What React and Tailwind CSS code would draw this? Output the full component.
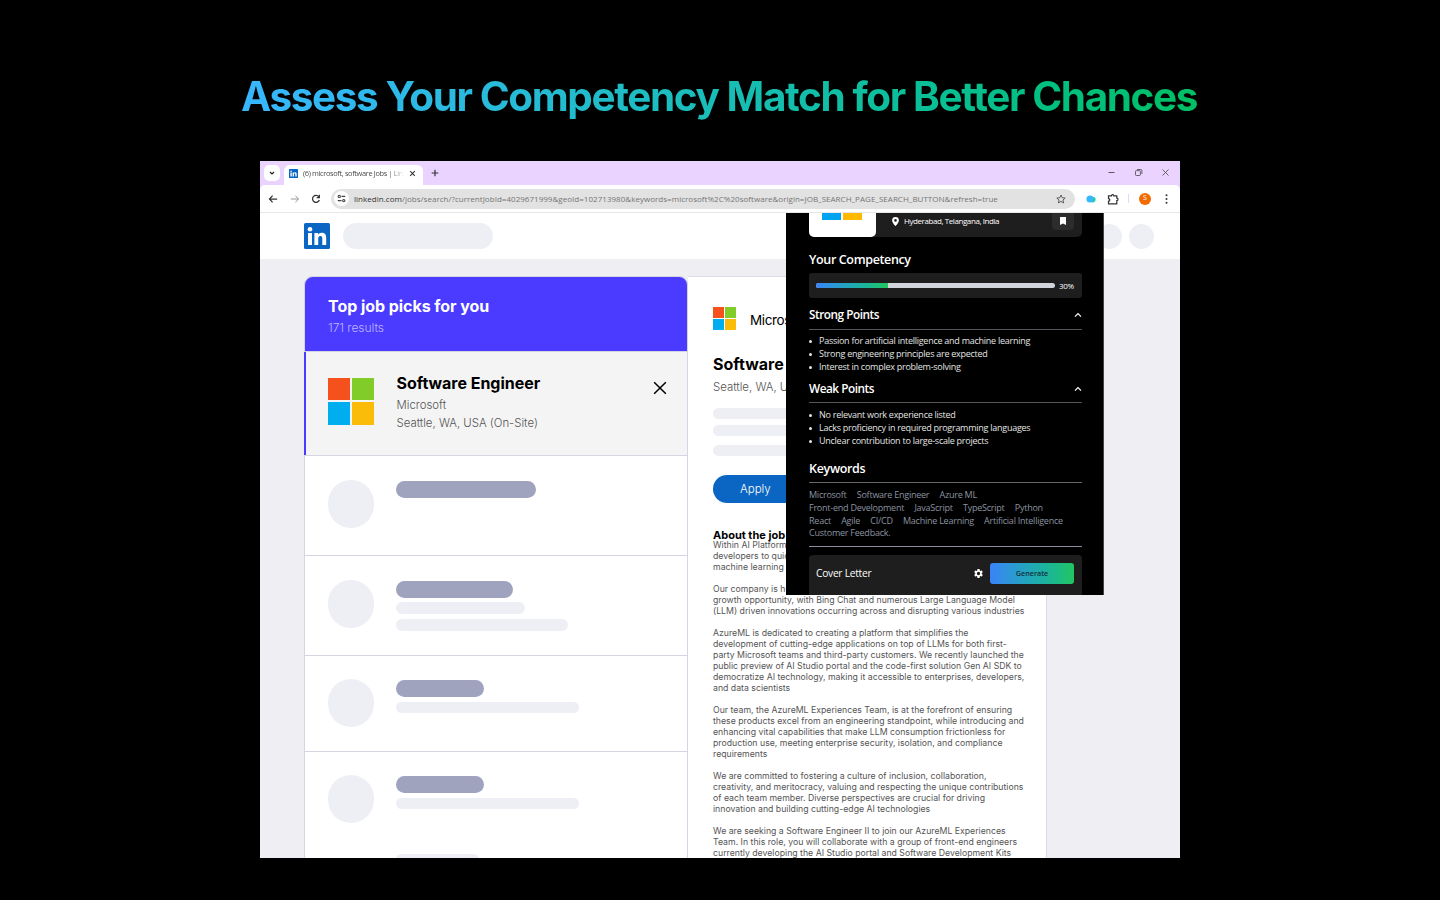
import React from "react";

const jobs = [
  { h: "h-[100px]", avatar: "mt-[24px]", bars: ["mt-[25px] h-[17px] w-[140px] bg-[#a0a3bd]"] },
  { h: "h-[100px]", avatar: "mt-[24px]", bars: ["mt-[25px] h-[17px] w-[116.5px] bg-[#a0a3bd]", "mt-[4.5px] h-[11.5px] w-[128.5px] bg-[#eeeff5]", "mt-[5.5px] h-[11.5px] w-[172px] bg-[#eeeff5]"] },
  { h: "h-[96px]", avatar: "mt-[23px]", bars: ["mt-[24px] h-[17px] w-[88px] bg-[#a0a3bd]", "mt-[5px] h-[11px] w-[182.5px] bg-[#eeeff5]"] },
  { h: "h-[107px]", avatar: "mt-[23px]", bars: ["mt-[24.5px] h-[17px] w-[88px] bg-[#a0a3bd]", "mt-[4.5px] h-[11px] w-[182.5px] bg-[#eeeff5]", "mt-[45px] h-[11px] w-[83px] bg-[#eeeff5]"] },
];

const about = [
  ["Within AI Platform, our team empowers", "developers to quickly build, train and deploy", "machine learning models"],
  ["Our company is heavily investing in this space as a", "growth opportunity, with Bing Chat and numerous Large Language Model", "(LLM) driven innovations occurring across and disrupting various industries"],
  ["AzureML is dedicated to creating a platform that simplifies the", "development of cutting-edge applications on top of LLMs for both first-", "party Microsoft teams and third-party customers. We recently launched the", "public preview of AI Studio portal and the code-first solution Gen AI SDK to", "democratize AI technology, making it accessible to enterprises, developers,", "and data scientists"],
  ["Our team, the AzureML Experiences Team, is at the forefront of ensuring", "these products excel from an engineering standpoint, while introducing and", "enhancing vital capabilities that make LLM consumption frictionless for", "production use, meeting enterprise security, isolation, and compliance", "requirements"],
  ["We are committed to fostering a culture of inclusion, collaboration,", "creativity, and meritocracy, valuing and respecting the unique contributions", "of each team member. Diverse perspectives are crucial for driving", "innovation and building cutting-edge AI technologies"],
  ["We are seeking a Software Engineer II to join our AzureML Experiences", "Team. In this role, you will collaborate with a group of front-end engineers", "currently developing the AI Studio portal and Software Development Kits"],
];

const keywords = [
  ["Microsoft", "Software Engineer", "Azure ML"],
  ["Front-end Development", "JavaScript", "TypeScript", "Python"],
  ["React", "Agile", "CI/CD", "Machine Learning", "Artificial Intelligence"],
  ["Customer Feedback."],
];

function LinkedIn({ className }) {
  return (
    <svg className={className} viewBox="0 0 26 26">
      <rect width="26" height="26" rx="1.5" fill="#0a66c2" />
      <circle cx="6" cy="6.3" r="2.3" fill="#fff" />
      <path d="M4 10h4v12H4zM10.4 10h3.700v1.600c.6-1.1 1.900-1.900 3.700-1.900 3.700 0 4.400 2.400 4.400 5.700V22h-3.900v-5.800c0-1.500-.1-3.100-1.900-3.100s-2.200 1.500-2.200 3.100V22h-3.800z" fill="#fff" />
    </svg>
  );
}

function Microsoft({ className }) {
  return (
    <div className={`grid shrink-0 grid-cols-2 ${className}`}>
      <div className="bg-[#f4511c]" />
      <div className="bg-[#81cc28]" />
      <div className="bg-[#00adef]" />
      <div className="bg-[#fbbc09]" />
    </div>
  );
}

function Stroke({ className, d, w = 1.3, box = "0 0 12 12" }) {
  return (
    <svg className={`shrink-0 ${className}`} viewBox={box} fill="none" stroke="currentColor" strokeWidth={w}>
      <path d={d} />
    </svg>
  );
}

function Browser() {
  return (
    <div className="shrink-0 bg-[#ead4ff] font-['Open_Sans','Noto_Sans',sans-serif]">
      <div className="flex h-[24px] items-start">
        <div className="ml-[4px] mt-[4px] flex h-[16px] w-[16px] items-center justify-center rounded-[5px] bg-white text-[#222]">
          <Stroke className="size-[8px]" w={1.8} d="M3 4.5 6 7.5 9 4.5" />
        </div>
        <div className="ml-[4px] mt-[4px] flex h-[20px] w-[139px] items-center rounded-t-[6px] bg-white pb-[4px] pl-[5px] text-[#333]">
          <LinkedIn className="size-[9px] shrink-0" />
          <div className="ml-[5px] w-[101px] shrink-0 overflow-hidden whitespace-nowrap bg-gradient-to-r from-[#444] from-85% to-[#ffffff] bg-clip-text text-[7.4px] leading-[12px] tracking-[-0.35px] text-transparent">(6) microsoft, software Jobs | Lin</div>
          <Stroke className="ml-[5px] size-[7px]" w={1.8} d="M2 2 10 10M10 2 2 10" />
        </div>
        <Stroke className="ml-[8px] mt-[8px] size-[8px] text-[#333]" w={1.8} d="M6 1V11M1 6H11" />
        <div className="ml-auto mr-[10px] mt-[7px] flex items-center gap-[18px] text-[#555]">
          <Stroke className="size-[9px]" w={1.3} d="M2 6H10" />
          <Stroke className="size-[9px]" w={1.2} d="M2 4.5a1 1 0 0 1 1-1H7.5a1 1 0 0 1 1 1V9a1 1 0 0 1-1 1H3a1 1 0 0 1-1-1ZM4 2H9A1.5 1.5 0 0 1 10.5 3.5V8" />
          <Stroke className="size-[9px]" w={1.2} d="M2 2 10 10M10 2 2 10" />
        </div>
      </div>
      <div className="flex h-[28px] items-center rounded-t-[5px] border-b border-[#e8e6ea] bg-white text-[#333]">
        <Stroke className="ml-[8px] size-[10px]" w={1.5} d="M11 6H2M5.5 2 1.8 6 5.5 10" />
        <Stroke className="ml-[12px] size-[10px] text-[#999]" w={1.2} d="M1 6H10M6.5 2 10.2 6 6.5 10" />
        <Stroke className="ml-[11px] size-[10px]" w={1.5} d="M10 7.2A4.2 4.2 0 1 1 9.3 3.2M10 1V4.2H6.8" />
        <div className="ml-[10px] flex h-[20px] w-[744px] items-center rounded-full bg-[#e2e2e2]">
          <div className="ml-[3px] flex size-[15px] items-center justify-center rounded-full bg-white">
            <svg className="size-[9px]" viewBox="0 0 12 12" fill="none" stroke="#444" strokeWidth="1.5">
              <path d="M6 3.2H11M1 8.8H6" />
              <circle cx="3" cy="3.2" r="1.5" />
              <circle cx="9" cy="8.8" r="1.5" />
            </svg>
          </div>
          <div className="ml-[5px] whitespace-nowrap text-[8px] tracking-[0.030px] text-[#757575]">
            <span className="text-[#333]">linkedin.com</span>/jobs/search/?currentJobId=4029671999&amp;geoId=102713980&amp;keywords=microsoft%2C%20software&amp;origin=JOB_SEARCH_PAGE_SEARCH_BUTTON&amp;refresh=true
          </div>
          <svg className="ml-auto mr-[9px] size-[10px]" viewBox="0 0 24 24" fill="none" stroke="#444" strokeWidth="2">
            <path d="M12 2.5 15 9l7 .7-5.300 4.700 1.600 7L12 17.700 5.700 21.400l1.600-7L2 9.700 9 9Z" />
          </svg>
        </div>
        <svg className="ml-[11px] h-[8px] w-[10px]" viewBox="0 0 10 8">
          <circle cx="6.800" cy="4.600" r="2.800" fill="#17d69a" />
          <circle cx="4" cy="4" r="3.600" fill="#38b6ff" />
        </svg>
        <Stroke className="ml-[11px] size-[12px]" w={1.200} d="M1.500 2.800H4.500C4.500 1.200 6.800 1.200 6.800 2.800H9.800V5.200C11.400 5.200 11.400 7.600 9.800 7.600V10.800H1.500V8.200C3.200 8.200 3.200 5.600 1.500 5.600Z" />
        <div className="ml-[9px] h-[9px] w-[1px] bg-[#ead4ff]" />
        <div className="ml-[10px] flex size-[12px] items-center justify-center rounded-full bg-[#f26b00] text-[7px] text-white">S</div>
        <svg className="ml-[10px] h-[10px] w-[11px]" viewBox="0 0 11 10" fill="#333">
          <circle cx="5.500" cy="1.300" r="1" />
          <circle cx="5.500" cy="5" r="1" />
          <circle cx="5.500" cy="8.700" r="1" />
        </svg>
      </div>
    </div>
  );
}

function JobList() {
  return (
    <div className="w-[383.500px] shrink-0">
      <div className="h-[76px] rounded-t-[9px] border border-[#d5d5e3] bg-[#4b3aff] pl-[23px] pt-[17px] text-white">
        <div className="text-[16px] font-bold leading-[24px] tracking-[-0.050px]">Top job picks for you</div>
        <div className="mt-[1px] text-[12px] font-light leading-[18px] tracking-[-0.050px] text-[#bcb6ff]">171 results</div>
      </div>
      <div className="flex h-[104px] border-b border-r border-[#d5d5e3] bg-[#f4f4f4]">
        <div className="w-[2px] bg-[#4b3aff]" />
        <Microsoft className="ml-[22px] mt-[26px] h-[47px] w-[46px] gap-[2px]" />
        <div className="ml-[22.500px] pt-[21px]">
          <div className="text-[16px] font-bold leading-[21px] tracking-[-0.030px] text-black">Software Engineer</div>
          <div className="mt-[2px] text-[11.400px] font-light leading-[18px] text-[#555]">Microsoft</div>
          <div className="text-[11.400px] font-light leading-[18px] text-[#555]">Seattle, WA, USA (On-Site)</div>
        </div>
        <Stroke className="ml-auto mr-[19.500px] mt-[29px] size-[14px] text-black" w={1.300} d="M1 1 11 11M11 1 1 11" />
      </div>
      {jobs.map((j, i) => (
        <div key={i} className={`flex border-b border-x border-[#d5d5e3] bg-white pl-[23px] ${j.h}`}>
          <div className={`h-[48px] w-[46.400px] shrink-0 rounded-full bg-[#eeeff5] ${j.avatar}`} />
          <div className="ml-[22px]">
            {j.bars.map((b, k) => (
              <div key={k} className={`rounded-full ${b}`} />
            ))}
          </div>
        </div>
      ))}
    </div>
  );
}

function Detail() {
  return (
    <div className="flex w-[359.500px] shrink-0 flex-col items-start border-r border-t border-[#dcdce8] bg-white pl-[25.500px] pt-[30px] *:shrink-0">
      <div className="flex items-center">
        <Microsoft className="size-[23px] gap-[1px]" />
        <div className="ml-[14px] pt-[3px] text-[13.500px] leading-[20px] tracking-[-0.400px] text-black">Microsoft</div>
      </div>
      <div className="mt-[22px] text-[16px] font-bold leading-[24px] text-black">Software Engineer</div>
      <div className="mt-[2px] text-[11.400px] font-light leading-[18px] text-[#555]">Seattle, WA, USA (On-Site)</div>
      <div className="mt-[12.500px] h-[11px] w-[220px] rounded-full bg-[#eeeff5]" />
      <div className="mt-[6px] h-[11px] w-[220px] rounded-full bg-[#eeeff5]" />
      <div className="mt-[8.500px] h-[11px] w-[220px] rounded-full bg-[#eeeff5]" />
      <div className="mt-[19.500px] flex h-[28px] w-[110px] items-center rounded-full bg-[#0a66c2] pl-[27px] pt-[1px] text-[11.500px] font-light text-white">Apply</div>
      <div className="mt-[25.500px] text-[11px] font-bold leading-[13px] text-black">About the job</div>
      <div className="-mt-[1.500px] flex flex-col gap-[11px] whitespace-nowrap text-[8.730px] leading-[11px] text-[#555]">
        {about.map((p, i) => (
          <div key={i}>{p.map((l) => <div key={l}>{l}</div>)}</div>
        ))}
      </div>
    </div>
  );
}

function Points({ title, items }) {
  return (
    <>
      <div className="flex h-[19px] items-center justify-between">
        <div className="text-[11.800px] font-semibold tracking-[-0.480px] text-white">{title}</div>
        <Stroke className="size-[8px] text-white" w={1.800} d="M1.500 8.500 6 4 10.500 8.500" />
      </div>
      <div className="mt-[4px] h-px bg-[#55555c]" />
      <div className="mt-[5.700px] text-[9px] leading-[12.800px] tracking-[-0.260px] text-[#e4e4e4]">
        {items.map((t) => (
          <div key={t} className="flex items-center whitespace-nowrap">
            <div className="mr-[7px] size-[3px] rounded-full bg-[#e4e4e4]" />
            {t}
          </div>
        ))}
      </div>
    </>
  );
}

function Popup() {
  return (
    <div className="absolute left-[526px] top-[52px] h-[382px] w-[317.500px] overflow-hidden border-r border-[#444] bg-black pl-[23px] font-['Open_Sans','Noto_Sans',sans-serif] text-white">
      <div className="flex w-[273px] flex-col">
        <div className="flex h-[24px] rounded-b-[5px] bg-[#1e1e1e]">
          <div className="flex h-[24px] w-[66.500px] items-start justify-center gap-[2px] rounded-b-[5px] bg-white">
            <div className="h-[7px] w-[19px] bg-[#00a4ef]" />
            <div className="h-[7px] w-[19px] bg-[#ffb900]" />
          </div>
          <svg className="ml-[16px] mt-[4px] h-[9px] w-[7px]" viewBox="0 0 12 16" fill="#fff">
            <path fillRule="evenodd" d="M6 0a6 6 0 0 1 6 6c0 4-6 10-6 10S0 10 0 6a6 6 0 0 1 6-6Zm0 3.700a2.300 2.300 0 1 0 0 4.600 2.300 2.300 0 0 0 0-4.600Z" />
          </svg>
          <div className="ml-[5.500px] whitespace-nowrap text-[8px] leading-[16px] tracking-[-0.420px]">Hyderabad, Telangana, India</div>
          <div className="ml-auto mr-[8px] flex h-[17px] w-[22px] items-center justify-center rounded-b-[4px] bg-[#2c2c2c] pb-[2px]">
            <svg className="h-[8px] w-[6px]" viewBox="0 0 6 8" fill="#fff"><path d="M0 0H6V8L3 6.500 0 8Z" /></svg>
          </div>
        </div>
        <div className="mt-[14px] text-[12.500px] font-semibold leading-[18px] tracking-[-0.360px]">Your Competency</div>
        <div className="mt-[4px] flex h-[25px] items-center rounded-[3px] bg-[#1e1e1e] pl-[7px]">
          <div className="h-[5px] w-[238.500px] overflow-hidden rounded-full bg-[#d1d5db]">
            <div className="h-full w-[30%] bg-gradient-to-r from-[#3b82f6] to-[#22c55e]" />
          </div>
          <div className="ml-[4.500px] text-[8px] tracking-[-0.300px]">30%</div>
        </div>
        <div className="h-[7.500px]" />
        <Points title="Strong Points" items={["Passion for artificial intelligence and machine learning", "Strong engineering principles are expected", "Interest in complex problem-solving"]} />
        <div className="h-[5.900px]" />
        <Points title="Weak Points" items={["No relevant work experience listed", "Lacks proficiency in required programming languages", "Unclear contribution to large-scale projects"]} />
        <div className="mt-[11px] text-[12.500px] font-semibold leading-[20px] tracking-[-0.330px]">Keywords</div>
        <div className="mt-[3.600px] h-px bg-[#66666d]" />
        <div className="mt-[6px] whitespace-nowrap text-[9px] leading-[12.700px] tracking-[-0.240px] text-[#8b93a1]">
          {keywords.map((row) => (
            <div key={row[0]} className="flex gap-[10.200px]">{row.map((k) => <span key={k}>{k}</span>)}</div>
          ))}
        </div>
        <div className="mt-[6.200px] h-px bg-[#8e8ea0]" />
        <div className="mt-[8px] flex h-[48px] items-start rounded-t-[4px] bg-[#1e1e1e] pl-[7px] pt-[8px]">
          <div className="text-[10.200px] leading-[21px] tracking-[-0.250px]">Cover Letter</div>
          <svg className="ml-auto mt-[5px] size-[11px]" viewBox="0 0 24 24" fill="#fff">
            <path d="M19.140 12.940c.04-.3.06-.61.06-.94s-.02-.64-.07-.94l2.030-1.580a.5.5 0 0 0 .12-.61l-1.920-3.320a.5.5 0 0 0-.59-.22l-2.390.96a7 7 0 0 0-1.620-.94l-.36-2.540A.48.48 0 0 0 13.920 2.400h-3.840a.48.48 0 0 0-.47.410l-.36 2.540c-.59.24-1.130.57-1.620.94l-2.390-.96a.5.5 0 0 0-.59.22L2.740 8.870a.48.48 0 0 0 .12.61l2.030 1.580a6 6 0 0 0 0 1.880l-2.030 1.580a.5.5 0 0 0-.12.61l1.920 3.320c.12.22.37.29.59.22l2.390-.96c.5.38 1.030.7 1.620.94l.36 2.540c.05.24.24.41.48.41h3.840c.24 0 .44-.17.47-.41l.36-2.540a7 7 0 0 0 1.620-.94l2.390.96c.22.08.47 0 .59-.22l1.920-3.320a.48.48 0 0 0-.12-.61ZM12 15.600a3.600 3.600 0 1 1 0-7.200 3.600 3.600 0 0 1 0 7.200Z" />
          </svg>
          <div className="ml-[6px] mr-[8px] h-[21px] w-[84px] rounded-[3px] bg-gradient-to-r from-[#3b82f6] to-[#22c55e] text-center text-[7.200px] font-semibold leading-[21px] text-[#12303a]">Generate</div>
        </div>
      </div>
    </div>
  );
}

export default function App() {
  return (
    <div className="flex h-[900px] w-[1440px] flex-col items-center overflow-hidden bg-black font-['Inter',sans-serif]">
      <h1 className="mt-[70px] whitespace-nowrap bg-gradient-to-r from-[#38b6ff] to-[#00bf63] bg-clip-text pr-[2px] text-[40.500px] font-bold leading-[54px] tracking-[-1.400px] text-transparent">Assess Your Competency Match for Better Chances</h1>
      <div className="relative mt-[37px] flex h-[697px] w-[920px] flex-col overflow-hidden bg-[#eeeef3]">
        <Browser />
        <div className="flex h-[46px] shrink-0 items-center bg-white pl-[44px]">
          <LinkedIn className="size-[26px]" />
          <div className="ml-[13px] h-[26px] w-[150.400px] rounded-full bg-[#eeeff5]" />
          <div className="ml-auto size-[25px] rounded-full bg-[#eeeff5]" />
          <div className="ml-[7px] mr-[26px] size-[25px] rounded-full bg-[#eeeff5]" />
        </div>
        <div className="flex min-h-0 flex-1 items-stretch pl-[44px] pt-[16.500px]">
          <JobList />
          <Detail />
        </div>
        <Popup />
      </div>
    </div>
  );
}
